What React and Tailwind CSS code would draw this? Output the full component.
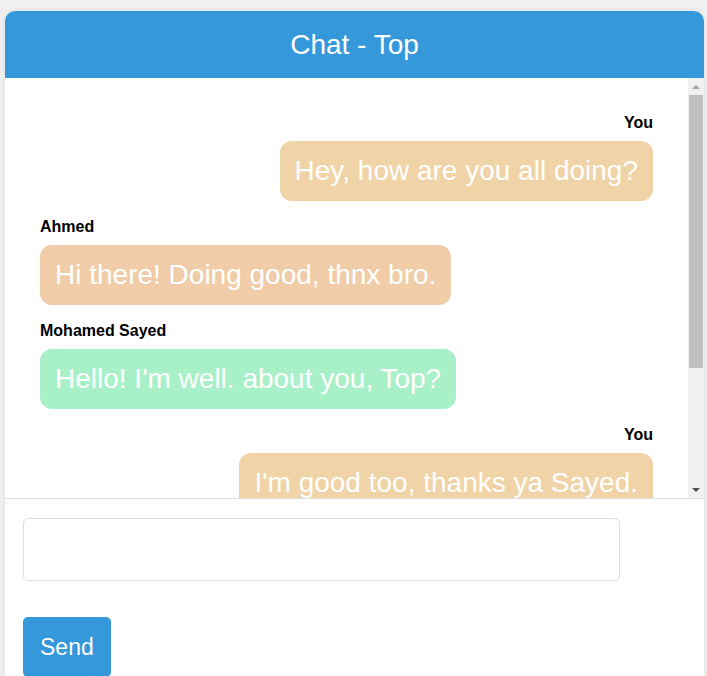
const messages = [
  { id: 1, from: 'You', text: 'Hey, how are you all doing?', mine: true, color: 'bg-[#f0d4a8]' },
  { id: 2, from: 'Ahmed', text: 'Hi there! Doing good, thnx bro.', mine: false, color: 'bg-[#f0cca8]' },
  { id: 3, from: 'Mohamed Sayed', text: "Hello! I'm well. about you, Top?", mine: false, color: 'bg-[#a8f0c8]' },
  { id: 4, from: 'You', text: "I'm good too, thanks ya Sayed.", mine: true, color: 'bg-[#f0d4a8]' },
]

const Message = ({ msg }) => (
  <div className={`flex flex-col mb-[16px] ${msg.mine ? 'items-end' : 'items-start'}`}>
    <span className="text-[16px] leading-[19px] font-bold text-black">{msg.from}</span>
    <div className={`mt-[9px] px-[15px] py-[15px] rounded-[12px] text-white text-[28px] leading-[30px] whitespace-nowrap ${msg.color}`}>
      {msg.text}
    </div>
  </div>
)

// classic scrollbar look (track, arrows, thumb)
const ScrollBar = () => (
  <div className="w-[16px] shrink-0 bg-[#f1f1f1] flex flex-col items-center">
    <div className="h-[17px] flex items-center justify-center">
      <div className="w-0 h-0 border-x-[4px] border-x-transparent border-b-[4px] border-b-[#a3a3a3]" />
    </div>
    <div className="w-[14px] h-[273px] bg-[#c1c1c1]" />
    <div className="flex-1" />
    <div className="h-[17px] flex items-center justify-center">
      <div className="w-0 h-0 border-x-[4px] border-x-transparent border-t-[4px] border-t-[#505050]" />
    </div>
  </div>
)

export default function App() {
  return (
    <div className="min-h-[676px] bg-[#f0f0f0] pt-[11px] pl-[5px] font-['Liberation_Sans',Arial,sans-serif]">
      <div className="w-[699px] bg-white rounded-t-[10px] shadow-[0_0_6px_rgba(0,0,0,0.08)] overflow-hidden">
        {/* Header */}
        <div className="h-[67px] bg-[#3498db] flex items-center justify-center">
          <h1 className="text-white text-[28px] leading-none">Chat - Top</h1>
        </div>

        {/* Messages */}
        <div className="h-[421px] flex border-b border-[#dddddd]">
          <div className="flex-1 overflow-hidden px-[35px] pt-[35px]">
            {messages.map((msg) => (
              <Message key={msg.id} msg={msg} />
            ))}
          </div>
          <ScrollBar />
        </div>

        {/* Composer */}
        <div className="px-[18px] pt-[19px] pb-[10px]">
          <textarea className="block w-[597px] h-[63px] border border-[#dddddd] rounded-[5px] resize-none outline-none" />
          <button className="mt-[36px] h-[60px] px-[17px] bg-[#3498db] text-white text-[23px] rounded-[5px]">
            Send
          </button>
        </div>
      </div>
    </div>
  )
}
